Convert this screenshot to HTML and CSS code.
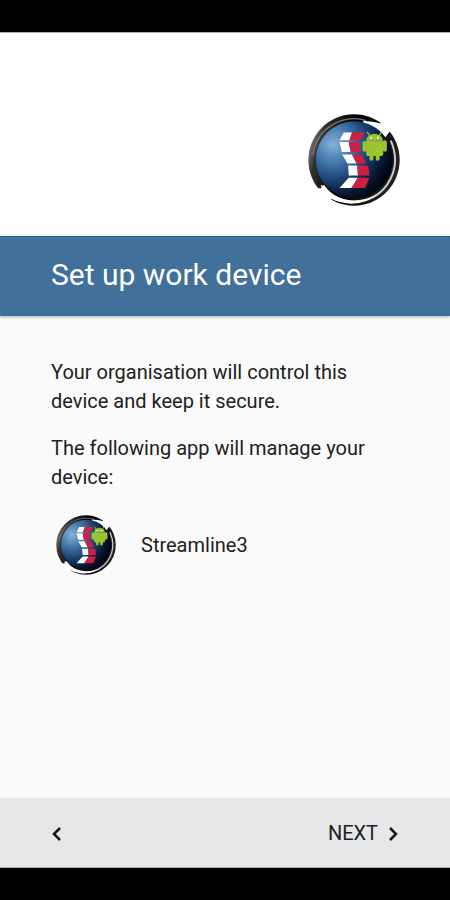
FILE: index.html
```
<!DOCTYPE html>
<html lang="en-GB">
<head>
    <meta charset="utf-8">
    <meta name="viewport" content="width=device-width, initial-scale=1">
    <title>Set up work device</title>
    <link rel="stylesheet" href="styles.css">
</head>
<body>
    <header class="top">
        <svg class="logo" viewBox="38 25 280 280" role="img" aria-label="Streamline3">
            <defs>
                <linearGradient id="rim" x1="0" y1="0.3" x2="1" y2="0.6">
                    <stop offset="0" stop-color="#8a8a8a"/>
                    <stop offset="0.12" stop-color="#333"/>
                    <stop offset="0.4" stop-color="#000"/>
                    <stop offset="1" stop-color="#222"/>
                </linearGradient>
                <radialGradient id="ball" cx="0.22" cy="0.3" r="0.8">
                    <stop offset="0" stop-color="#86b2da"/>
                    <stop offset="0.3" stop-color="#4479ab"/>
                    <stop offset="0.58" stop-color="#1a4273"/>
                    <stop offset="0.82" stop-color="#081a35"/>
                    <stop offset="1" stop-color="#020611"/>
                </radialGradient>
                <symbol id="badge" viewBox="38 25 280 280">
                    <circle cx="178" cy="165" r="139" fill="url(#rim)"/>
                    <!-- highlights on the rim -->
                    <path d="M53 150A126 126 0 0 1 215 45" fill="none" stroke="#777" stroke-width="4"/>
                    <path d="M206 46Q236 46 258 54L266 40L294 68L272 98Q246 65 206 51Z" fill="#fff"/>
                    <path d="M290 106Q321 177 279 240Q242 292 176 291Q112 288 78 242" fill="none" stroke="#ccc" stroke-width="6"/>
                    <path d="M60 251H78L86 240Q121 288 181 289Q220 288 249 268Q217 299 168 298Q132 296 110 284L96 292Z" fill="#fff"/>
                    <circle cx="179" cy="164" r="117" fill="url(#ball)"/>
                    <!-- striped S -->
                    <path d="M147 81H172L164 105H134ZM134 110H162L168 141H141ZM142 148H172L186 176H158ZM160 182H188L190 212H162ZM162 219H190L170 250H134Z" fill="#fff"/>
                    <path d="M172 81H212L198 105H164ZM162 110H194L199 141H168ZM172 148H201L215 176H186ZM188 182H221L225 212H190ZM190 219H225L212 250H170Z" fill="#cf1f40"/>
                    <!-- robot -->
                    <g fill="#9bc42f" stroke="#9bc42f" stroke-linecap="round">
                        <path d="M215 106Q217 87 240 85Q264 87 266 106Z" stroke="none"/>
                        <path d="M226 92L219 81M254 92L261 81" stroke-width="4"/>
                        <path d="M215 108H267V145Q267 153 259 153H223Q215 153 215 145Z" stroke="none"/>
                        <path d="M210 113V134M272 111V134" stroke-width="12"/>
                        <path d="M231 150V161M250 150V161" stroke-width="12"/>
                    </g>
                    <path d="M215 107H267" stroke="#d2e59f" stroke-width="2"/>
                    <circle cx="230" cy="97" r="3" fill="#fff"/>
                    <circle cx="251" cy="97" r="3" fill="#fff"/>
                </symbol>
            </defs>
            <use href="#badge" x="38" y="25" width="280" height="280"/>
        </svg>
    </header>

    <div class="title-bar">
        <h1>Set up work device</h1>
    </div>

    <main class="content">
        <p>Your organisation will control this device and keep it secure.</p>
        <p>The following app will manage your device:</p>
        <div class="app">
            <svg class="app-icon" viewBox="0 0 280 280" aria-hidden="true">
                <use href="#badge" width="280" height="280"/>
            </svg>
            <span>Streamline3</span>
        </div>
    </main>

    <footer class="nav">
        <button type="button" class="nav-button" aria-label="Back">
            <svg class="chevron" viewBox="0 0 10 16" aria-hidden="true">
                <path d="M8 2L2 8L8 14"/>
            </svg>
        </button>
        <button type="button" class="nav-button">
            NEXT
            <svg class="chevron" viewBox="0 0 10 16" aria-hidden="true">
                <path d="M2 2L8 8L2 14"/>
            </svg>
        </button>
    </footer>
</body>
</html>
```
FILE: styles.css
```
* {
    box-sizing: border-box;
}

body {
    margin: 0;
    min-height: 100vh;
    display: flex;
    flex-direction: column;
    border-top: 32px solid #000;
    border-bottom: 32px solid #000;
    background: #fafafa;
    color: #212121;
    font-family: Roboto, "Liberation Sans", sans-serif;
    font-size: 20px;
    line-height: 29px;
}

.top {
    display: flex;
    justify-content: flex-end;
    padding: 81px 49px 30px;
    border-top: 1px solid #aaa;
    background: #fff;
}

.logo {
    width: 94px;
    height: 92px;
}

.title-bar {
    padding: 18px 51px 22px;
    border-top: 1px solid #1f6089;
    background: #41719b;
    box-shadow: 0 1px 3px rgba(0, 0, 0, 0.3);
    color: #fff;
}

h1 {
    margin: 0;
    font-size: 30px;
    font-weight: 400;
    line-height: 39px;
}

.content {
    flex: 1;
    padding: 42px 51px;
}

p {
    margin: 0 0 18px;
}

.app {
    display: flex;
    align-items: center;
    gap: 25px;
    padding: 5px;
}

.app-icon {
    width: 60px;
    height: 60px;
}

.nav {
    display: flex;
    justify-content: space-between;
    padding: 13px 50px 11px;
    border-bottom: 1px solid #aaa;
    background: #e6e7e9;
}

.nav-button {
    display: flex;
    align-items: center;
    gap: 10px;
    padding: 8px 2px;
    border: none;
    background: none;
    color: #212121;
    font: inherit;
    cursor: pointer;
}

.chevron {
    width: 10px;
    height: 16px;
    fill: none;
    stroke: #111;
    stroke-width: 2.5;
}
```
